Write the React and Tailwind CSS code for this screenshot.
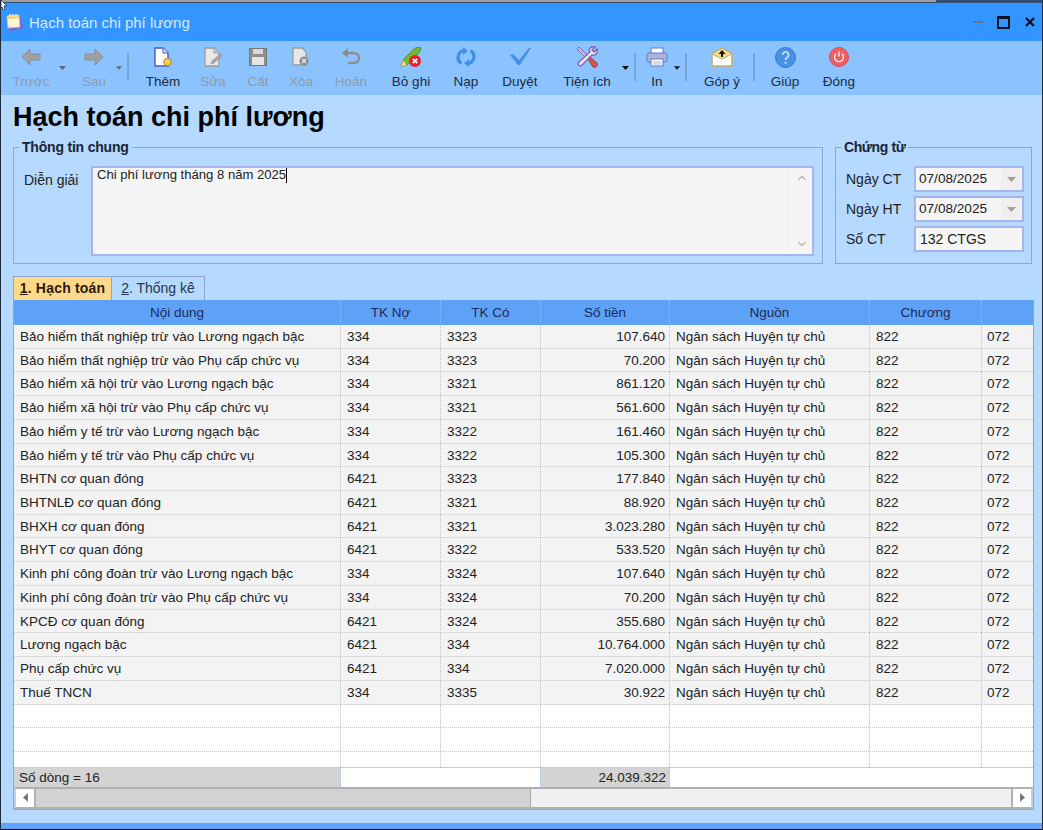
import React from "react";
import { ChevronUp, ChevronDown } from "lucide-react";

const ArrowL = () => (
  <svg width="20" height="18" viewBox="0 0 20 18"><path d="M9 1 1 9l8 8v-5h10V6H9z" fill="#a0a0a0" stroke="#8e8e8e" /></svg>
);
const ArrowR = () => (
  <svg width="20" height="18" viewBox="0 0 20 18"><path d="M11 1l8 8-8 8v-5H1V6h10z" fill="#a0a0a0" stroke="#8e8e8e" /></svg>
);
const DocNew = () => (
  <svg width="20" height="20" viewBox="0 0 20 20">
    <path d="M2 1h8l5 5v13H2z" fill="#fff" stroke="#4a58c8" strokeWidth="1.4" />
    <path d="M10 1v5h5" fill="#dfe4fb" stroke="#4a58c8" />
    <circle cx="14.500" cy="15" r="3.800" fill="#f5cd4f" stroke="#a98a25" />
  </svg>
);
const DocEdit = () => (
  <svg width="20" height="20" viewBox="0 0 20 20">
    <path d="M2 1h9l5 5v13H2z" fill="#e8e8e8" stroke="#9a9a9a" strokeWidth="1.3" />
    <path d="M11 1v5h5" fill="#ccc" stroke="#9a9a9a" />
    <path d="M8 17l1-3 8-7 2 2-8 7z" fill="#a8a8a8" stroke="#8c8c8c" strokeWidth=".6" />
  </svg>
);
const Floppy = () => (
  <svg width="18" height="18" viewBox="0 0 18 18">
    <rect x=".5" y=".5" width="17" height="17" fill="#8f8f8f" stroke="#777" />
    <rect x="4" y="1" width="10" height="5" fill="#d8d8d8" />
    <rect x="3" y="9" width="12" height="8" fill="#e6e6e6" />
  </svg>
);
const DocDel = () => (
  <svg width="20" height="20" viewBox="0 0 20 20">
    <path d="M2 1h9l4 4v13H2z" fill="#e8e8e8" stroke="#9a9a9a" strokeWidth="1.3" />
    <circle cx="13" cy="14" r="4.600" fill="#8d8d8d" />
    <path d="M11 12l4 4m0-4-4 4" stroke="#eee" strokeWidth="1.200" />
  </svg>
);
const Undo = () => (
  <svg width="20" height="18" viewBox="0 0 20 18" fill="none">
    <path d="M2 5h11a4.500 4.500 0 0 1 0 10H7" stroke="#8e8e8e" strokeWidth="2.400" />
    <path d="M7 0 1 5l6 5z" fill="#8e8e8e" />
  </svg>
);
const PenX = () => (
  <svg width="22" height="22" viewBox="0 0 22 22">
    <path d="M1 21l2-7L14 3c2-2 5-2 7-1-1 3-2 5-4 7L7 19z" fill="#74b82f" stroke="#3f7d18" strokeWidth=".8" />
    <path d="M1 21l2-7 4 5z" fill="#e9d28e" />
    <circle cx="15" cy="15" r="6" fill="#e8202a" />
    <path d="M12.800 12.800l4.400 4.400m0-4.400-4.400 4.400" stroke="#fff" strokeWidth="1.800" />
  </svg>
);
const Reload = () => (
  <svg width="20" height="20" viewBox="0 0 20 20" fill="none">
    <path d="M9 3.500a7 7 0 0 0-3.500 13" stroke="#3f8fe8" strokeWidth="3.200" />
    <path d="M11 16.500a7 7 0 0 0 3.500-13" stroke="#3f8fe8" strokeWidth="3.200" />
    <path d="M7 0l5 4-5 4zM13 20l-5-4 5-4z" fill="#3f8fe8" />
  </svg>
);
const Check = () => (
  <svg width="21" height="18" viewBox="0 0 21 18"><path d="M0 7l3-1 6 6L19 0h2L10 17H8z" fill="#4a90e2" /></svg>
);
const Tools = () => (
  <svg width="22" height="22" viewBox="0 0 22 22">
    <path d="M1 3l2-2 11 11-2 2z" fill="#c9b8e2" stroke="#6a5a9c" strokeWidth=".8" />
    <path d="M12 13l2-2 7 6c1 3-1 5-4 4z" fill="#d9534a" stroke="#8d3028" strokeWidth=".8" />
    <path d="M21 3l-3 3-2-2 3-3c-4-1-7 2-5 5L3 16c-2 3 1 5 3 3L16 9c4 1 6-2 5-6z" fill="#ece3f7" stroke="#7a62aa" strokeWidth="1.300" />
  </svg>
);
const Printer = () => (
  <svg width="22" height="20" viewBox="0 0 22 20">
    <rect x="5" y="1" width="12" height="6" fill="#fff" stroke="#6a78c0" />
    <rect x="1" y="6" width="20" height="9" rx="2" fill="#a9b4e2" stroke="#6a78c0" />
    <rect x="5" y="12" width="12" height="7" fill="#fff" stroke="#6a78c0" />
    <path d="M7 15h8M7 17h8" stroke="#a9b4e2" />
  </svg>
);
const Mail = () => (
  <svg width="22" height="20" viewBox="0 0 22 20">
    <path d="M1 7l10-6 10 6v12H1z" fill="#fff" stroke="#c9ab62" strokeWidth="1.500" />
    <path d="M1 7l10-6 10 6-10 5z" fill="#f7dc8e" stroke="#c9ab62" />
    <path d="M11 3l3.500 4H12v3h-2V7H7.500z" fill="#111" />
  </svg>
);
const Help = () => (
  <svg width="21" height="21" viewBox="0 0 21 21">
    <circle cx="10.500" cy="10.500" r="10" fill="#4a8fe8" stroke="#3a78c8" />
    <path d="M7.600 8a3 3 0 1 1 4.600 2.500c-1.200.8-1.700 1.300-1.700 2.700" fill="none" stroke="#cfe3fb" strokeWidth="1.700" />
    <circle cx="10.500" cy="15.800" r="1.100" fill="#cfe3fb" />
  </svg>
);
const Power = () => (
  <svg width="20" height="20" viewBox="0 0 20 20">
    <circle cx="10" cy="10" r="9.500" fill="#ee5f63" stroke="#d84d52" />
    <path d="M7 6.800a4.500 4.500 0 1 0 6 0" fill="none" stroke="#fff" strokeWidth="1.200" />
    <path d="M10 4.500v5" stroke="#fff" strokeWidth="1.200" />
  </svg>
);

const Caret = ({ className, color }) => (
  <div className={`flex justify-center pt-[25px] self-start ${className}`}>
    <svg width="7" height="4" viewBox="0 0 7 4"><path d="M0 0h7L3.500 4z" fill={color} /></svg>
  </div>
);
const Sep = ({ className }) => (
  <div className={`flex justify-center ${className}`}>
    <div className="w-[2px] h-[28px] mt-[12px] bg-[#79a4d6]" />
  </div>
);
const Tool = ({ icon, label, className, off }) => (
  <div className={`flex flex-col items-center shrink-0 ${className}`}>
    <div className="h-[31px] pt-[1px] flex items-center justify-center">{icon}</div>
    <div className={`text-[13.5px] leading-[20px] whitespace-nowrap ${off ? "text-[#8f9aa6]" : "text-[#1f2a3a]"}`}>{label}</div>
  </div>
);

const DateBox = ({ label }) => (
  <div className="flex items-center h-[26px]">
    <div className="w-[68px] pt-[1px]">{label}</div>
    <div className="w-[110px] h-[26px] border-2 border-[#a5b4ea] bg-[#f5f5f5] flex items-center pl-[3px]">
      <span className="flex-1 text-[13.6px]">07/08/2025</span>
      <div className="w-[21px] h-full bg-[#efefef] flex items-center justify-center">
        <svg width="9" height="5" viewBox="0 0 9 5"><path d="M0 0h9L4.500 5z" fill="#a0a0a0" /></svg>
      </div>
    </div>
  </div>
);

const rows = [
  ["Bảo hiểm thất nghiệp trừ vào Lương ngạch bậc", "334", "3323", "107.640"],
  ["Bảo hiểm thất nghiệp trừ vào Phụ cấp chức vụ", "334", "3323", "70.200"],
  ["Bảo hiểm xã hội trừ vào Lương ngạch bậc", "334", "3321", "861.120"],
  ["Bảo hiểm xã hội trừ vào Phụ cấp chức vụ", "334", "3321", "561.600"],
  ["Bảo hiểm y tế trừ vào Lương ngạch bậc", "334", "3322", "161.460"],
  ["Bảo hiểm y tế trừ vào Phụ cấp chức vụ", "334", "3322", "105.300"],
  ["BHTN cơ quan đóng", "6421", "3323", "177.840"],
  ["BHTNLĐ cơ quan đóng", "6421", "3321", "88.920"],
  ["BHXH cơ quan đóng", "6421", "3321", "3.023.280"],
  ["BHYT cơ quan đóng", "6421", "3322", "533.520"],
  ["Kinh phí công đoàn trừ vào Lương ngạch bậc", "334", "3324", "107.640"],
  ["Kinh phí công đoàn trừ vào Phụ cấp chức vụ", "334", "3324", "70.200"],
  ["KPCĐ cơ quan đóng", "6421", "3324", "355.680"],
  ["Lương ngạch bậc", "6421", "334", "10.764.000"],
  ["Phụ cấp chức vụ", "6421", "334", "7.020.000"],
  ["Thuế TNCN", "334", "3335", "30.922"],
];

const cols = "grid grid-cols-[327px_100px_100px_129px_200px_112px_1fr]";
const cell = "border-r border-dotted border-[#c4c4c4] pl-[6px] truncate";
const head = "border-r border-dotted border-[#8ebcf8] leading-[26px]";

const App = () => {
  return (
    <div className="relative w-[1043px] h-[830px] overflow-hidden flex flex-col bg-[#b5d9ff] border-x border-[#1d2b3c] font-['Liberation_Sans',sans-serif] text-[14px] text-[#222]">
      {/* mouse pointer */}
      <svg className="absolute left-0 top-0" width="7" height="10" viewBox="0 0 7 10">
        <path d="M0 0l6 6H3l1 3-2 1-1-3-1 1z" fill="#fff" stroke="#000" strokeWidth=".6" />
      </svg>

      <div className="flex h-[3px] shrink-0 border-b border-[#34506f]">
        <div className="w-[935px] bg-[#a0a0a0]" />
        <div className="flex-1 bg-[#2f4f78]" />
      </div>

      {/* title bar */}
      <div className="h-[38px] shrink-0 bg-[#3395ff] flex items-center pl-[5px] pr-[7px]">
        <svg width="17" height="19" viewBox="0 0 17 19">
          <path d="M1 4l13-2 3 13-13 3z" fill="#7b62c4" />
          <path d="M1 3l12-1 1 12-12 1z" fill="#fdf6d2" stroke="#cbb3e6" />
          <path d="M1 3l12-1v3L1 6z" fill="#f6cf4e" />
          <path d="M4 1v3M7 1v3M10 1v3" stroke="#fff" strokeWidth="1.200" />
        </svg>
        <span className="ml-[6px] mt-[3px] text-[15px] text-[#d7eaff]">Hạch toán chi phí lương</span>
        <div className="ml-auto flex items-center">
          <div className="w-[10px] h-[2px] bg-[#5c7392]" />
          <div className="ml-[14px] w-[13px] h-[13px] border-2 border-t-[3px] border-[#0c1420]" />
          <svg className="ml-[15px]" width="10" height="10" viewBox="0 0 10 10">
            <path d="M1 1l8 8m0-8-8 8" stroke="#0c1420" strokeWidth="2.200" />
          </svg>
        </div>
      </div>

      {/* toolbar */}
      <div className="h-[54px] shrink-0 bg-[#8ac3ff] flex pl-[9px]">
        <Tool className="w-[42px]" off icon={<ArrowL />} label="Trước" />
        <Caret className="w-[20px]" color="#666" />
        <Tool className="w-[44px]" off icon={<ArrowR />} label="Sau" />
        <Caret className="w-[6px]" color="#666" />
        <Sep className="w-[12px]" />
        <Tool className="w-[58px]" icon={<DocNew />} label="Thêm" />
        <Tool className="w-[42px]" off icon={<DocEdit />} label="Sửa" />
        <Tool className="w-[48px]" off icon={<Floppy />} label="Cất" />
        <Tool className="w-[38px]" off icon={<DocDel />} label="Xóa" />
        <Tool className="w-[62px]" off icon={<Undo />} label="Hoãn" />
        <Tool className="w-[58px]" icon={<PenX />} label="Bỏ ghi" />
        <Tool className="w-[52px]" icon={<Reload />} label="Nạp" />
        <Tool className="w-[56px]" icon={<Check />} label="Duyệt" />
        <Tool className="w-[68px] ml-[5px]" icon={<Tools />} label="Tiện ích" />
        <Caret className="w-[9px]" color="#111" />
        <Sep className="w-[10px]" />
        <Tool className="w-[34px]" icon={<Printer />} label="In" />
        <Caret className="w-[6px]" color="#111" />
        <Sep className="w-[12px]" />
        <Tool className="w-[60px]" icon={<Mail />} label="Góp ý" />
        <Sep className="w-[4px]" />
        <Tool className="w-[58px]" icon={<Help />} label="Giúp" />
        <Tool className="w-[50px]" icon={<Power />} label="Đóng" />
      </div>

      {/* content */}
      <div className="flex-1 flex flex-col pl-[12px] pr-[8px]">
        <h1 className="h-[43px] text-[27px] leading-[44px] font-bold text-black whitespace-nowrap">Hạch toán chi phí lương</h1>

        <div className="flex h-[126px]">
          <fieldset className="w-[810px] border border-[#8ea6d4] pl-[10px] pr-[8px]">
            <legend className="ml-[-5px] px-[3px] font-bold text-[14px] tracking-[-0.2px] leading-[18px] text-[#1a2433]">Thông tin chung</legend>
            <div className="flex pt-[10px]">
              <div className="w-[67px] pt-[4px]">Diễn giải</div>
              <div className="w-[723px] h-[90px] border-2 border-[#a5b4ea] bg-[#f5f5f5] flex">
                <div className="flex-1 pl-[4px] leading-[14px] text-[13.1px] flex items-start">
                  <span className="whitespace-nowrap">Chi phí lương tháng 8 năm 2025</span>
                  <span className="w-[1px] h-[15px] bg-black" />
                </div>
                <div className="w-[21px] border-l border-[#fafafa] flex flex-col justify-between items-center py-[3px] text-[#b5b5b5]">
                  <ChevronUp size={14} />
                  <ChevronDown size={14} />
                </div>
              </div>
            </div>
          </fieldset>

          <fieldset className="ml-[12px] w-[197px] border border-[#8ea6d4] pl-[10px]">
            <legend className="ml-[-5px] px-[3px] font-bold text-[14px] tracking-[-0.4px] leading-[18px] text-[#1a2433]">Chứng từ</legend>
            <div className="flex flex-col gap-[4px] pt-[10px]">
              <DateBox label="Ngày CT" />
              <DateBox label="Ngày HT" />
              <div className="flex items-center h-[26px]">
                <div className="w-[68px] pt-[1px]">Số CT</div>
                <div className="w-[110px] h-[26px] border-2 border-[#a5b4ea] bg-[#f5f5f5] flex items-center pl-[4px]">132 CTGS</div>
              </div>
            </div>
          </fieldset>
        </div>

        {/* tabs */}
        <div className="mt-[12px] flex h-[24px] shrink-0">
          <div className="w-[99px] h-[24px] bg-[#ffd98a] border border-[#8ea6d4] border-b-0 flex items-center justify-center font-bold tracking-[0.2px] text-[#2a1a10]">
            <span><u>1</u>. Hạch toán</span>
          </div>
          <div className="w-[93px] h-[24px] border border-l-0 border-[#8ea6d4] border-b-0 flex items-center justify-center text-[#26364d]">
            <span><u>2</u>. Thống kê</span>
          </div>
        </div>

        {/* grid */}
        <div className="w-[1021px] border border-t-0 border-[#8ea6d4] flex flex-col text-[13.5px] leading-[23px]">
          <div className={`${cols} h-[25px] bg-[#5ea2f8] text-[#1c2a58] text-center items-stretch`}>
            <div className={head}>Nội dung</div>
            <div className={head}>TK Nợ</div>
            <div className={head}>TK Có</div>
            <div className={head}>Số tiền</div>
            <div className={head}>Nguồn</div>
            <div className={head}>Chương</div>
            <div />
          </div>
          {rows.map((r) => (
            <div key={r[0]} className={`${cols} h-[23.73px] bg-[#f3f3f3] border-b border-dotted border-[#c4c4c4]`}>
              <div className={cell}>{r[0]}</div>
              <div className={cell}>{r[1]}</div>
              <div className={cell}>{r[2]}</div>
              <div className={`${cell} text-right pr-[4px]`}>{r[3]}</div>
              <div className={`${cell} pl-[3px]`}>Ngân sách Huyện tự chủ</div>
              <div className={`${cell} pl-[4px]`}>822</div>
              <div className="pl-[5px]">072</div>
            </div>
          ))}
          <div className={`${cols} h-[23.73px] bg-white border-b border-dotted border-[#c4c4c4]`}>
            <div className={cell} /><div className={cell} /><div className={cell} /><div className={cell} /><div className={cell} /><div className={cell} /><div />
          </div>
          <div className={`${cols} h-[23.73px] bg-white border-b border-dotted border-[#c4c4c4]`}>
            <div className={cell} /><div className={cell} /><div className={cell} /><div className={cell} /><div className={cell} /><div className={cell} /><div />
          </div>
          <div className={`${cols} h-[15px] bg-white`}>
            <div className={cell} /><div className={cell} /><div className={cell} /><div className={cell} /><div className={cell} /><div className={cell} /><div />
          </div>
          {/* footer */}
          <div className={`${cols} h-[20px] border-t border-[#b9cfe8] bg-white leading-[19px]`}>
            <div className="bg-[#d3d3d3] pl-[5px] border-r border-[#b9cfe8]">Số dòng = 16</div>
            <div className="col-span-2 border-r border-[#b9cfe8]" />
            <div className="bg-[#d3d3d3] text-right pr-[3px] border-r border-[#b9cfe8]">24.039.322</div>
            <div className="col-span-3" />
          </div>
          {/* scrollbar */}
          <div className="h-[22px] flex bg-[#f0f0f0] border-2 border-[#b0b0b0] border-x-[#bcd0e8]">
            <div className="w-[20px] bg-white flex items-center justify-center border-r-2 border-[#b0b0b0]">
              <svg width="5" height="9" viewBox="0 0 5 9"><path d="M5 0v9L0 4.500z" fill="#777" /></svg>
            </div>
            <div className="w-[495px] bg-[#d2d2d2] border-r border-[#a9a9a9]" />
            <div className="flex-1" />
            <div className="w-[20px] bg-white flex items-center justify-center border-l-2 border-[#b0b0b0]">
              <svg width="5" height="9" viewBox="0 0 5 9"><path d="M0 0v9l5-4.500z" fill="#777" /></svg>
            </div>
          </div>
        </div>
      </div>

      <div className="h-[6px] shrink-0 bg-[#62a5f8]" />
      <div className="h-[1px] shrink-0 bg-[#111]" />
    </div>
  );
};

export default App;
